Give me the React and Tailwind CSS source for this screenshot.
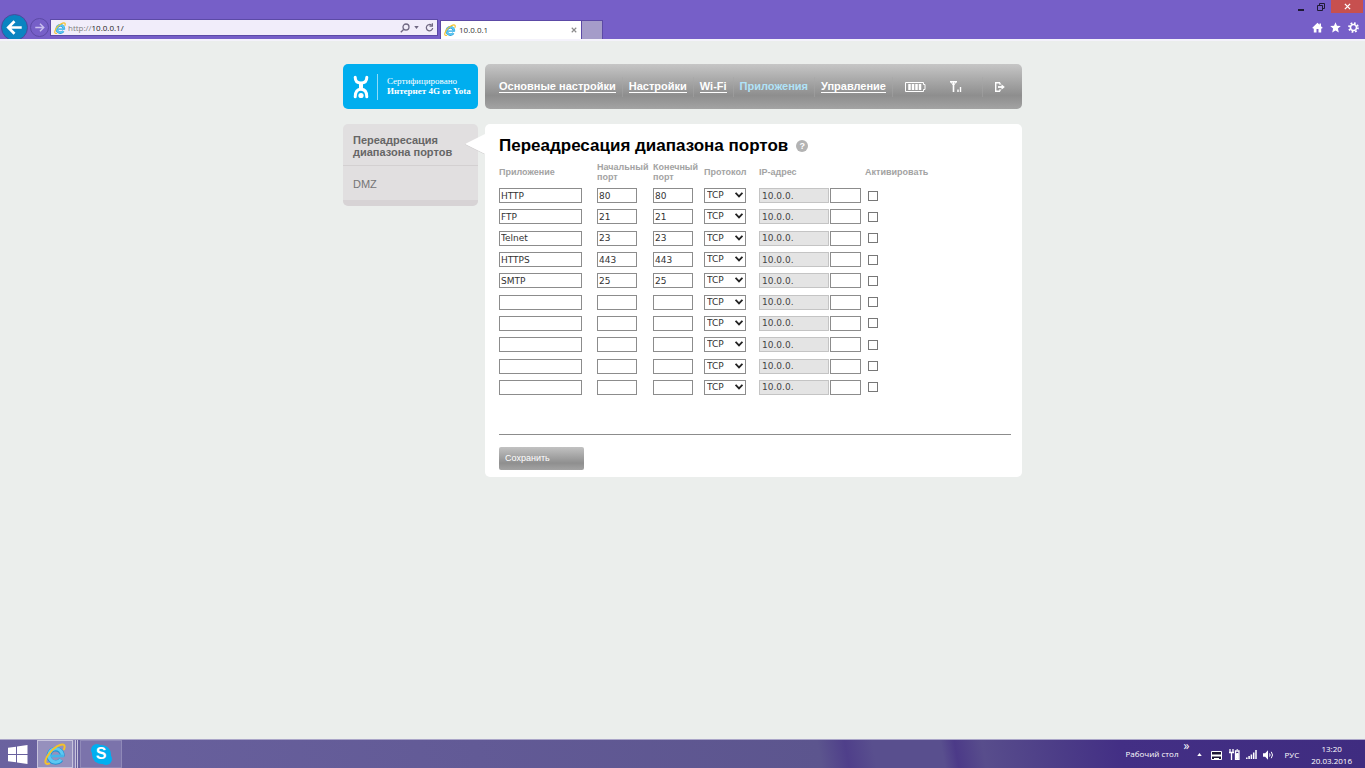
import { useState } from "react";
import clsx from "clsx";

const RULES = [
  { app: "HTTP", from: "80", to: "80" },
  { app: "FTP", from: "21", to: "21" },
  { app: "Telnet", from: "23", to: "23" },
  { app: "HTTPS", from: "443", to: "443" },
  { app: "SMTP", from: "25", to: "25" },
  { app: "", from: "", to: "" },
  { app: "", from: "", to: "" },
  { app: "", from: "", to: "" },
  { app: "", from: "", to: "" },
  { app: "", from: "", to: "" },
];

const NAV = ["Основные настройки", "Настройки", "Wi-Fi", "Приложения", "Управление"];

const FIELD =
  "h-[15px] border border-[#8c8c8c] bg-white px-px text-[9px] leading-none text-[#333] outline-none font-['DejaVu_Sans',sans-serif]";

function IeLogo({ className }) {
  return (
    <svg viewBox="0 0 24 24" className={className} fill="none" aria-hidden="true">
      <path d="M20 14.500A7.300 7.300 0 1 0 18.700 18.200" stroke="#1f93d3" strokeWidth="5" />
      <path d="M20 14.300A7.300 7.300 0 1 0 18.500 18" stroke="#5cc8f2" strokeWidth="3.600" />
      <path d="M7.500 14.200h14" stroke="#45b5e8" strokeWidth="3" />
      <path
        d="M5.500 22.500C2.500 23.600.8 22 1.800 18.500 3.200 13.500 8.500 7 14.500 3.500 18.500 1.200 22.300.8 22.500 3.800c.1 1-.2 2-.7 3"
        stroke="#f3c22b"
        strokeWidth="2.200"
        strokeLinecap="round"
      />
    </svg>
  );
}

function BrowserBar() {
  return (
    <header className="flex h-[41px] items-start border-b-2 border-[#f4f2fb] bg-[#765fc8] font-['Open_Sans','Noto_Sans',sans-serif]">
      <div className="flex h-[39px] items-end overflow-hidden">
        <button type="button" aria-label="Назад" className="-mb-0.5 ml-px size-[27px] shrink-0 rounded-full border border-[#4c4a9c] bg-[#0a84c1]">
          <svg viewBox="0 0 26 26" className="size-full" fill="none" stroke="#fff" strokeWidth="2.800">
            <path d="M20.500 13H7M13 6.500 6.500 13l6.500 6.500" />
          </svg>
        </button>
        <button type="button" aria-label="Вперёд" className="mb-0.5 ml-0.5 size-[19px] shrink-0 rounded-full border border-[#5c4aa6]">
          <svg viewBox="0 0 18 18" className="size-full" fill="none" stroke="#c9bfee" strokeWidth="1.500">
            <path d="M4.500 9h9M9.500 5l4 4-4 4" />
          </svg>
        </button>
        <div className="mb-[3px] ml-px flex h-[17px] w-[388px] items-center border border-[#5c4aa6] bg-[#f1edfa] px-[3px]">
          <IeLogo className="size-3 shrink-0" />
          <label htmlFor="url" className="pl-0.5 text-[8px] text-[#808080]">
            http://
          </label>
          <input
            id="url"
            defaultValue="10.0.0.1/"
            className="min-w-0 flex-1 bg-transparent text-[8px] leading-none text-[#222] outline-none"
          />
          <button type="button" aria-label="Поиск" className="flex items-center gap-1">
            <svg viewBox="0 0 10 10" className="size-[10px]" fill="none" stroke="#6f6882" strokeWidth="1.300">
              <circle cx="6" cy="4" r="3" />
              <path d="M3.800 6.200.8 9.200" />
            </svg>
            <svg viewBox="0 0 6 4" className="h-[3px] w-[5px]">
              <path d="M0 0h6L3 4z" fill="#6f6882" />
            </svg>
          </button>
          <button type="button" aria-label="Обновить" className="ml-1.5">
            <svg viewBox="0 0 10 10" className="size-[9px]" fill="none" stroke="#6f6882" strokeWidth="1.400">
              <path d="M7.500 2.700A3.500 3.500 0 1 0 8.500 5.500" />
              <path d="M8.200.3v3.200H5" />
            </svg>
          </button>
        </div>
        <div className="ml-0.5 flex h-[19px] w-[142px] items-center border border-b-0 border-[#5c4aa6] bg-white pr-1 pl-[3px]">
          <IeLogo className="size-3 shrink-0" />
          <span className="flex-1 pl-[3px] text-[8px] text-[#333]">10.0.0.1</span>
          <button type="button" aria-label="Закрыть вкладку">
            <svg viewBox="0 0 8 8" className="size-[6px]" stroke="#8a8a8a" strokeWidth="1.500">
              <path d="M1 1l6 6M7 1 1 7" />
            </svg>
          </button>
        </div>
        <button type="button" aria-label="Новая вкладка" className="h-[19px] w-[21px] border border-b-0 border-l-0 border-[#5c4aa6] bg-[#a59cc9]" />
      </div>

      <div className="ml-auto flex flex-col items-end">
        <div className="flex h-[13px] items-center pr-0.5">
          <button type="button" aria-label="Свернуть" className="px-[7px]">
            <svg viewBox="0 0 6 8" className="h-2 w-[6px]">
              <path d="M0 6h6v2H0z" fill="#1f1a35" />
            </svg>
          </button>
          <button type="button" aria-label="Восстановить" className="px-[6px]">
            <svg viewBox="0 0 8 8" className="size-2" fill="none" stroke="#1f1a35">
              <path d="M.5 2.500h5v5h-5zM2.500 2.500v-2h5v5h-2" />
            </svg>
          </button>
          <button type="button" aria-label="Закрыть" className="flex h-[13px] w-8 items-center justify-center bg-[#c7504f]">
            <svg viewBox="0 0 8 8" className="size-[7px]" stroke="#fff" strokeWidth="1.500">
              <path d="M1 1l6 6M7 1 1 7" />
            </svg>
          </button>
        </div>
        <div className="flex items-center gap-[7px] pt-[9px] pr-1.5">
          <button type="button" aria-label="Домашняя страница">
            <svg viewBox="0 0 11 11" className="size-[11px]" fill="#fff">
              <path d="M5.500.8.300 5.800l.9.900.6-.5V10.500h2.700V7h2v3.500h2.700V6.200l.6.500.9-.9-1.700-1.600V1.500H7.500v1.200z" />
            </svg>
          </button>
          <button type="button" aria-label="Избранное">
            <svg viewBox="0 0 11 11" className="size-[11px]" fill="#fff">
              <path d="m5.500.3 1.500 3.500 3.800.3-2.900 2.500.9 3.800-3.300-2-3.300 2 .9-3.800L.2 4.100 4 3.800z" />
            </svg>
          </button>
          <button type="button" aria-label="Сервис">
            <svg viewBox="0 0 12 12" className="size-[11px]" fill="none" stroke="#fff">
              <circle cx="6" cy="6" r="3.300" strokeWidth="1.700" />
              <circle cx="6" cy="6" r="4.900" strokeWidth="1.900" strokeDasharray="1.900 1.950" />
            </svg>
          </button>
        </div>
      </div>
    </header>
  );
}

function YotaBadge() {
  return (
    <div className="flex h-[45px] w-[135px] shrink-0 items-center rounded-[5px] bg-[#00aeef] pl-[10px] text-white">
      <svg viewBox="0 0 16 24" className="h-6 w-4" fill="none" stroke="#fff" strokeLinecap="round">
        <path d="M2.200 2.200C2.200 6 4.500 8 8 8s5.800-2 5.800-5.800" strokeWidth="3" />
        <path d="M8 8v6" strokeWidth="4" strokeLinecap="butt" />
        <path d="M2.200 21.800C2.200 16.500 4.500 14.200 8 14.200s5.800 2.300 5.800 7.600" strokeWidth="3" />
        <circle cx="8" cy="20.500" r="2.600" fill="#fff" stroke="none" />
      </svg>
      <div className="ml-2 h-[26px] w-px bg-[#8fdcf9]" />
      <p className="pb-0.5 pl-[9px] font-['Liberation_Serif',serif] text-[9px] leading-[10px] whitespace-nowrap">
        Сертифицировано
        <br />
        <b>Интернет 4G от Yota</b>
      </p>
    </div>
  );
}

function TopNav() {
  return (
    <nav className="flex h-[45px] flex-1 items-center rounded-[5px] bg-linear-to-b from-[#c6c6c6] via-[#8e8e8e] via-70% to-[#a3a3a3] pl-2 text-[11px] font-bold text-white">
      {NAV.map((label) => (
        <span key={label} className="flex h-5 items-center border-r border-[#a6a6a6]/50 px-1.5 whitespace-nowrap">
          {label === "Приложения" ? (
            <span className="text-[#b0e3f8]">{label}</span>
          ) : (
            <a href="#" className="border-b border-white leading-[12px]">
              {label}
            </a>
          )}
        </span>
      ))}
      <svg viewBox="0 0 21 10" className="ml-3 h-[10px] w-[21px]" fill="none" stroke="#fff">
        <path d="M.5.500h18v2h1.500v5h-1.500v2H.5z" />
        <path d="M4.500 2v6M8 2v6M11.500 2v6M15 2v6" strokeWidth="2.500" />
      </svg>
      <svg viewBox="0 0 12 11" className="ml-6 h-[11px] w-3" fill="none" stroke="#fff">
        <path d="M0 .8h7M3.500.5V11" strokeWidth="1.600" />
        <path d="M.8.800 3.500 4.500 6.200.800" />
        <path d="M8 11V8.500M10.500 11V6" strokeWidth="1.400" />
      </svg>
      <span className="ml-5 h-5 w-px bg-[#a6a6a6]/50" />
      <a href="#" aria-label="Выход" className="ml-3">
        <svg viewBox="0 0 10 10" className="size-[10px]" fill="none" stroke="#fff" strokeWidth="1.400">
          <path d="M5 .7H.7v8.600H5M5 .7v2M5 7.300v2" />
          <path d="M3 5h4.500" strokeWidth="1.800" />
          <path d="M6.500 2.200 9.800 5 6.500 7.800z" fill="#fff" stroke="none" />
        </svg>
      </a>
    </nav>
  );
}

function SideMenu() {
  return (
    <aside className="w-[135px] shrink-0 self-start overflow-hidden rounded-[5px] border-b-[6px] border-[#d7d3d5] bg-[#e1dfe0] text-[11px] text-[#666]">
      <a href="#" className="block border-b border-[#d3d0d1] px-[10px] pt-[10px] pb-[7px] leading-[12px] font-bold">
        Переадресация
        <br />
        диапазона портов
      </a>
      <a href="#" className="block px-[10px] pt-3 pb-[9px] leading-[13px] text-[#757575]">
        DMZ
      </a>
    </aside>
  );
}

function RuleRow({ rule, index }) {
  const [on, setOn] = useState(false);
  const n = index + 1;
  return (
    <tr>
      <td>
        <input aria-label={`Приложение ${n}`} defaultValue={rule.app} className={clsx(FIELD, "block w-[83px]")} />
      </td>
      <td>
        <input aria-label={`Начальный порт ${n}`} defaultValue={rule.from} className={clsx(FIELD, "block w-10")} />
      </td>
      <td>
        <input aria-label={`Конечный порт ${n}`} defaultValue={rule.to} className={clsx(FIELD, "block w-10")} />
      </td>
      <td>
        <div className="relative w-[42px]">
          <select aria-label={`Протокол ${n}`} className={clsx(FIELD, "block w-full appearance-none pl-0.5")}>
            <option>TCP</option>
            <option>UDP</option>
          </select>
          <svg viewBox="0 0 8 6" className="pointer-events-none absolute top-1 right-[3px] h-[6px] w-2" fill="none" stroke="#222" strokeWidth="1.800">
            <path d="M.6.800 4 4.400 7.400.800" />
          </svg>
        </div>
      </td>
      <td>
        <div className="flex gap-px">
          <input
            aria-label={`Подсеть ${n}`}
            defaultValue="10.0.0."
            disabled
            className="h-[15px] w-[70px] border border-[#c4c4c4] bg-[#e4e4e4] px-0.5 font-['DejaVu_Sans',sans-serif] text-[9px] leading-none text-[#444]"
          />
          <input aria-label={`IP-адрес ${n}`} className={clsx(FIELD, "w-[31px]")} />
        </div>
      </td>
      <td>
        <input
          type="checkbox"
          aria-label={`Активировать ${n}`}
          checked={on}
          onChange={() => setOn(!on)}
          className="ml-[3px] block size-[10px] appearance-none border border-[#777] bg-white checked:bg-[#777]"
        />
      </td>
    </tr>
  );
}

function PortForm() {
  return (
    <main className="relative flex-1 rounded-[5px] bg-white pt-[13px] pr-[11px] pb-[7px] pl-[14px]">
      {/* указатель на активный пункт меню */}
      <svg viewBox="0 0 20 20" className="absolute top-[10px] -left-[20px] h-5 w-5">
        <path d="M0 10 20 20" stroke="#c9c6c7" />
        <path d="M20 0 0 10l20 10z" fill="#fff" />
      </svg>
      <h1 className="flex items-center gap-2 text-[17px] leading-[18px] font-bold text-black">
        Переадресация диапазона портов
        <button type="button" aria-label="Справка" className="size-3 rounded-full bg-[#b3b3b3] text-center text-[9px] leading-3 text-white">
          ?
        </button>
      </h1>
      <table className="mt-[5px] h-[238px] w-full table-fixed border-collapse text-left">
        <colgroup>
          <col className="w-[98px]" />
          <col className="w-14" />
          <col className="w-[51px]" />
          <col className="w-[55px]" />
          <col className="w-[106px]" />
          <col />
        </colgroup>
        <thead>
          <tr className="h-[25px] text-[9px] leading-[10px] text-[#a3a3a3]">
            <th className="pb-px">Приложение</th>
            <th className="pb-px">Начальный порт</th>
            <th className="pb-px whitespace-nowrap">
              Конечный
              <br />
              порт
            </th>
            <th className="pb-px">Протокол</th>
            <th className="pb-px">IP-адрес</th>
            <th className="pb-px">Активировать</th>
          </tr>
        </thead>
        <tbody>
          {RULES.map((rule, i) => (
            <RuleRow key={i} rule={rule} index={i} />
          ))}
        </tbody>
      </table>
      <hr className="mt-9 border-t border-[#8c8c8c]" />
      <button
        type="submit"
        className="mt-3 block h-[23px] w-[85px] rounded-xs bg-linear-to-b from-[#c2c2c2] via-[#8f8f8f] via-70% to-[#a3a3a3] pt-px pl-1.5 text-left text-[9px] text-white"
      >
        Сохранить
      </button>
    </main>
  );
}

function Taskbar() {
  return (
    <footer className="flex h-[29px] items-stretch border-t border-[#aaa5c8] bg-[linear-gradient(80deg,#6a629f_0%,#625a96_35%,#5c558e_60%,#4f3f8a_62%,#594f8e_64%,#594f8e_69%,#4c3a88_70%,#584d8c_72%,#4b3b87_78%,#432f85_82%,#3f2c80_100%)] font-['Open_Sans','Noto_Sans',sans-serif] text-[8px] text-white">
      <button type="button" aria-label="Пуск" className="pr-[9px] pl-2">
        <svg viewBox="0 0 20 19" className="h-[19px] w-5" fill="#fff">
          <path d="M0 2.800 8 1.700v7.400H0zM9 1.500 19.500 0v9H9zM0 10h8v7.300L0 16.200zM9 10h10.500v9L9 17.500z" />
        </svg>
      </button>
      <button type="button" aria-label="Internet Explorer" className="flex w-9 items-center justify-center border border-[#c7c3dc] bg-[#9690bd]">
        <IeLogo className="size-[22px]" />
      </button>
      <div className="w-[3px] border-r border-[#c7c3dc] bg-[#8780b3]" />
      <div className="w-0.5 border-r border-[#c7c3dc]" />
      <button type="button" aria-label="Skype" className="ml-0.5 flex w-[42px] items-center justify-center border border-[#8f89b8] bg-[#7b73ab]">
        <span className="relative flex size-[19px] items-center justify-center rounded-full bg-[#00aff0] font-['Liberation_Sans',sans-serif] text-[16px] leading-none font-bold">
          <span className="absolute -top-px -left-px size-3 rounded-full bg-[#00aff0]" />
          <span className="absolute -right-px -bottom-px size-3 rounded-full bg-[#00aff0]" />
          <span className="relative">S</span>
        </span>
      </button>

      <div className="ml-auto flex items-center pr-[13px]">
        <span>Рабочий стол</span>
        <span className="ml-[5px] self-start text-[12px] leading-[12px]">»</span>
        <svg viewBox="0 0 6 4" className="ml-2 h-[3px] w-[5px]">
          <path d="M0 4h6L3 0z" fill="#fff" />
        </svg>
        <svg viewBox="0 0 11 9" className="mt-[3px] ml-[9px] h-[9px] w-[11px]" fill="none" stroke="#fff">
          <path d="M.5.500h10v8H.5z" fill="#1d1637" />
          <path d="M0 4.500h11" strokeWidth="2" />
          <path d="M3 7.500h5" />
        </svg>
        <svg viewBox="0 0 11 11" className="mt-px ml-[7px] h-[11px] w-[11px]" fill="none" stroke="#fff">
          <path d="M2.500 3v8M0 3.500h5M1 0v3M4 0v3" strokeWidth="1.300" />
          <path d="M6.500 2h3.500v8.500H6.500z" strokeWidth="1.300" />
          <path d="M7.500 4.500h1.700v5H7.500zM7.500.800h1.600" fill="#fff" />
        </svg>
        <svg viewBox="0 0 11 9" className="mt-px ml-[6px] h-[9px] w-[11px]" stroke="#fff" strokeWidth="1.500">
          <path d="M.8 9V7.500M3.100 9V6M5.400 9V4.500M7.700 9V2.500M10 9V0" />
        </svg>
        <svg viewBox="0 0 11 10" className="mt-px ml-[6px] h-[10px] w-[11px]" fill="none" stroke="#fff">
          <path d="M0 3.200h2.200L5 .3v9.400L2.200 6.800H0z" fill="#fff" stroke="none" />
          <path d="M6.500 3.500q1.200 1.500 0 3M8.300 1.800q2.400 3.200 0 6.400" />
        </svg>
        <span className="ml-[10px] pt-px">РУС</span>
        <time className="ml-3 pt-0.5 text-center leading-[12px]">
          13:20
          <br />
          20.03.2016
        </time>
      </div>
    </footer>
  );
}

export default function App() {
  return (
    <div className="flex min-h-screen flex-col bg-[#ebeeec] font-['Liberation_Sans',sans-serif]">
      <BrowserBar />
      <div className="mx-auto w-full max-w-[679px] flex-1 pt-[23px]">
        <div className="flex gap-[7px]">
          <YotaBadge />
          <TopNav />
        </div>
        <div className="mt-[15px] flex gap-[7px]">
          <SideMenu />
          <PortForm />
        </div>
      </div>
      <Taskbar />
    </div>
  );
}
